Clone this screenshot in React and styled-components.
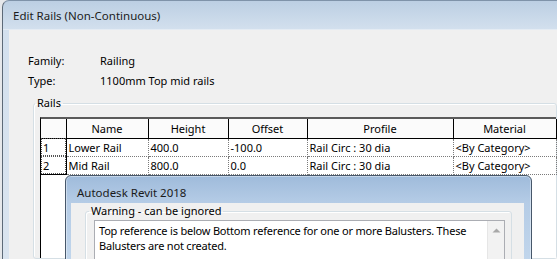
import React from "react";
import styled, { createGlobalStyle } from "styled-components";

const GlobalStyle = createGlobalStyle`
  * { box-sizing: border-box; }
  html, body { margin: 0; padding: 0; }
  body {
    width: 557px;
    height: 259px;
    overflow: hidden;
    background: #e6e8eb;
    font-family: "Noto Sans", "Open Sans", sans-serif;
    font-size: 11px;
    color: #000;
  }
`;

const columns = [
  { label: "", width: 25 },
  { label: "Name", width: 82 },
  { label: "Height", width: 80 },
  { label: "Offset", width: 79 },
  { label: "Profile", width: 146 },
  { label: "Material", width: 103 },
];

const rails = [
  ["1", "Lower Rail", "400.0", "-100.0", "Rail Circ : 30 dia", "<By Category>"],
  ["2", "Mid Rail", "800.0", "0.0", "Rail Circ : 30 dia", "<By Category>"],
];

const App = () => {
  return (
    <Page>
      <GlobalStyle />
      <Window>
        <TitleBar>Edit Rails (Non-Continuous)</TitleBar>
        <Client>
          <Info>
            <span>Family:</span>
            <span>Railing</span>
            <span>Type:</span>
            <span>1100mm Top mid rails</span>
          </Info>
          <Group $ml={24}>
            <Legend>Rails</Legend>
            <Grid>
              <Table>
                <colgroup>
                  {columns.map((c, i) => (
                    <col key={i} style={{ width: c.width }} />
                  ))}
                </colgroup>
                <thead>
                  <tr>
                    {columns.map((c, i) => (
                      <Th key={i}>{c.label}</Th>
                    ))}
                  </tr>
                </thead>
                <tbody>
                  {rails.map((row, r) => (
                    <tr key={r}>
                      {row.map((v, i) =>
                        i === 0 ? (
                          <RowHead key={i} $last={r === rails.length - 1}>
                            {v}
                          </RowHead>
                        ) : (
                          <Td key={i}>{v}</Td>
                        )
                      )}
                    </tr>
                  ))}
                </tbody>
              </Table>
            </Grid>
          </Group>
        </Client>
      </Window>

      <Dialog>
        <DialogTitle>Autodesk Revit 2018</DialogTitle>
        <DialogClient>
          <Group $ml={14} $mr={12}>
            <Legend>Warning - can be ignored</Legend>
            <TextBox>
              <Message>
                Top reference is below Bottom reference for one or more
                Balusters. These Balusters are not created.
              </Message>
              <ScrollBar>
                <svg width="9" height="5" viewBox="0 0 9 5">
                  <path d="M0.5 4.5 L4.5 0.5 L8.5 4.5 Z" fill="#a8a8a8" />
                </svg>
              </ScrollBar>
            </TextBox>
          </Group>
        </DialogClient>
      </Dialog>
    </Page>
  );
};

export default App;

const Page = styled.div`
  position: relative;
  width: 557px;
  height: 259px;
  overflow: hidden;
`;

const Window = styled.div`
  margin-left: 2px;
  height: 259px;
  display: flex;
  flex-direction: column;
  border-left: 1px solid #5d6a78;
  border-top: 1px solid #7f93a9;
  border-top-left-radius: 7px;
  background: linear-gradient(#bccfe3, #d3e0ee 29px, #dae4ef);
  overflow: hidden;
`;

const TitleBar = styled.div`
  height: 29px;
  flex-shrink: 0;
  display: flex;
  align-items: center;
  padding: 1px 0 0 10px;
  color: #1c1c1c;
  font-size: 11.5px;
  border-bottom: 1px solid #e4ebf3;
`;

const Client = styled.div`
  flex: 1;
  margin-left: 6px;
  padding-top: 20px;
  background: #f0f0f0;
  display: flex;
  flex-direction: column;
`;

const Info = styled.div`
  display: grid;
  grid-template-columns: 72px auto;
  grid-auto-rows: 20px;
  align-items: center;
  padding-left: 19px;
`;

const Group = styled.fieldset`
  flex: 1;
  margin: 5px ${(p) => p.$mr || 0}px 0 ${(p) => p.$ml}px;
  padding: 6px 6px 0 6px;
  border: 1px solid #d5dfe5;
  border-radius: 3px;
  box-shadow: inset 1px 1px 0 #fff;
  display: flex;
  flex-direction: column;
  min-width: 0;
`;

const Legend = styled.legend`
  margin-left: -5px;
  padding: 0 2px;
  line-height: 16px;
`;

const Grid = styled.div`
  flex: 1;
  background: #fff;
  border-left: 1px solid #000;
  border-top: 2px solid #5a5a5a;
  margin-right: -6px;
`;

const Table = styled.table`
  border-collapse: collapse;
  table-layout: fixed;
  width: 515px;
`;

const Th = styled.th`
  height: 19px;
  padding: 0;
  font-weight: normal;
  text-align: center;
  background: #fbfbfb;
  border-right: 1px solid #000;
  border-bottom: 1px solid #000;
`;

const Td = styled.td`
  height: 18px;
  padding: 0 0 0 2px;
  white-space: nowrap;
  border-right: 1px dotted #7a7a7a;
  border-bottom: 1px dotted #7a7a7a;
`;

const RowHead = styled(Td)`
  padding-left: 2px;
  border-right: 1px solid #000;
  border-bottom: ${(p) => (p.$last ? "1px solid #000" : "1px dotted #7a7a7a")};
  outline: 1px dotted #555;
  outline-offset: -1px;
`;

const Dialog = styled.div`
  position: absolute;
  left: 65px;
  top: 175px;
  width: 467px;
  height: 100px;
  display: flex;
  flex-direction: column;
  border: 1px solid #47576a;
  border-radius: 6px 6px 0 0;
  background: linear-gradient(#9fbbdb, #b5cce6 27px, #c4d8ed);
  box-shadow: 0 0 0 1px rgba(255, 255, 255, 0.4) inset;
`;

const DialogTitle = styled.div`
  height: 27px;
  flex-shrink: 0;
  display: flex;
  align-items: center;
  padding: 5px 0 0 11px;
  color: #1a1a1a;
  font-size: 11.5px;
`;

const DialogClient = styled.div`
  flex: 1;
  margin: 0 7px 0 5px;
  background: #f0f0f0;
  display: flex;
  flex-direction: column;

  & > fieldset {
    margin-top: 0;
    padding: 1px 6px 0 8px;
  }
`;

const TextBox = styled.div`
  flex: 1;
  display: flex;
  background: #fff;
  border: 1px solid #abadb3;
  border-bottom: none;
`;

const Message = styled.div`
  flex: 1;
  padding: 2px 4px;
  line-height: 15px;
  letter-spacing: -0.2px;
`;

const ScrollBar = styled.div`
  width: 17px;
  display: flex;
  justify-content: center;
  padding-top: 7px;
  background: #f2f2f2;
  border-left: 1px solid #e6e6e6;
`;
